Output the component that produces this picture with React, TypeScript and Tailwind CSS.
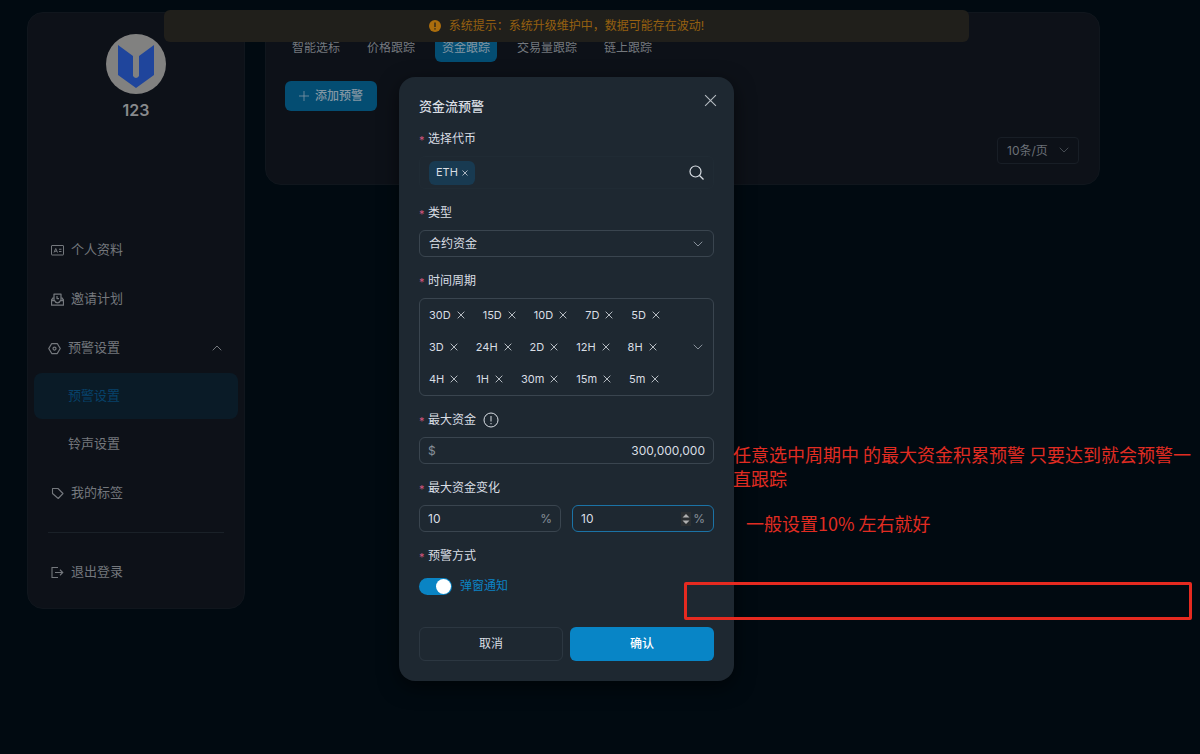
import { useState } from "react";

interface IconProps {
  className?: string;
}

function CrossIcon({ className }: IconProps) {
  return (
    <svg viewBox="0 0 12 12" className={className} fill="none" stroke="currentColor" aria-hidden="true">
      <path d="M1 1l10 10M11 1L1 11" />
    </svg>
  );
}

function ChevronIcon({ className }: IconProps) {
  return (
    <svg viewBox="0 0 10 10" className={className} fill="none" stroke="currentColor" strokeLinecap="round" aria-hidden="true">
      <path d="M1 3l4 4 4-4" />
    </svg>
  );
}

function ProfileIcon({ className }: IconProps) {
  return (
    <svg viewBox="0 0 26 26" className={className} fill="none" stroke="currentColor" strokeWidth="2" aria-hidden="true">
      <rect x="1" y="3" width="24" height="19" rx="1" />
      <path d="M6 17l3.5-8L13 17M7.5 14.5h4M16 10.500h5M16 15h5" />
    </svg>
  );
}

function InviteIcon({ className }: IconProps) {
  return (
    <svg viewBox="0 0 26 26" className={className} fill="none" stroke="currentColor" strokeWidth="2.500" strokeLinejoin="round" aria-hidden="true">
      <path d="M6 15V2h14v13" />
      <path d="M5 9l-4 5v10h24V14l-4-5" />
      <path d="M1 15h6c1 3 3 4.500 6 4.500s5-1.500 6-4.500h6" />
      <path d="M12 6v5h4" />
    </svg>
  );
}

function SettingIcon({ className }: IconProps) {
  return (
    <svg viewBox="0 0 26 26" className={className} fill="none" stroke="currentColor" strokeWidth="2.500" strokeLinejoin="round" aria-hidden="true">
      <path d="M7.500 3h11l6 10-6 10h-11l-6-10z" />
      <circle cx="13" cy="13" r="3" />
    </svg>
  );
}

function TagIcon({ className }: IconProps) {
  return (
    <svg viewBox="0 0 26 26" className={className} fill="none" stroke="currentColor" strokeWidth="2.200" strokeLinejoin="round" aria-hidden="true">
      <path d="M3 3h11l10 10-9.500 10L3 13z" />
    </svg>
  );
}

function LogoutIcon({ className }: IconProps) {
  return (
    <svg viewBox="0 0 26 26" className={className} fill="none" stroke="currentColor" strokeWidth="2.200" aria-hidden="true">
      <path d="M14 3H2v20h12M8 13h16M18 7.500l5.500 5.500-5.500 5.500" />
    </svg>
  );
}

const periods = [
  "30D", "15D", "10D", "7D", "5D",
  "3D", "24H", "2D", "12H", "8H",
  "4H", "1H", "30m", "15m", "5m",
];

const tabs = ["智能选标", "价格跟踪", "资金跟踪", "交易量跟踪", "链上跟踪"];

function Sidebar() {
  const item = "flex h-[46px] items-center gap-[7px] rounded-lg";
  return (
    <aside className="flex w-[218px] shrink-0 flex-col rounded-2xl border border-[#10161d] bg-[#0d1118] px-1.5 pt-[21px] pb-[13px] text-[13px] text-[#74787d]">
      <div className="flex flex-col items-center gap-1.5">
        <svg viewBox="0 0 60 60" className="size-[60px]" aria-hidden="true">
          <circle cx="30" cy="30" r="30" fill="#818180" />
          <path d="M12 11l15 11v20q3 4 6 0V22l15-11v30L30 54 12 41z" fill="#1f459c" />
        </svg>
        <span className="text-base leading-5 font-semibold text-[#87898c]">123</span>
      </div>
      <nav className="mt-[107px] flex flex-col gap-[3px]">
        <a href="#profile" className={`${item} px-[17px]`}>
          <ProfileIcon className="size-[13px]" />
          个人资料
        </a>
        <a href="#invite" className={`${item} px-[17px]`}>
          <InviteIcon className="size-[13px]" />
          邀请计划
        </a>
        <div className="flex flex-col gap-0.5">
          <button type="button" className={`${item} px-3.5`}>
            <SettingIcon className="size-[13px]" />
            预警设置
            <ChevronIcon className="mr-0.5 ml-auto size-2.5 rotate-180" />
          </button>
          <a href="#alert" className={`${item} bg-[#0a1b27] px-[34px] text-[#07426a]`}>
            预警设置
          </a>
          <a href="#ring" className={`${item} px-[34px]`}>
            铃声设置
          </a>
        </div>
        <a href="#tags" className={`${item} px-[17px]`}>
          <TagIcon className="size-[13px]" />
          我的标签
        </a>
      </nav>
      <hr className="mx-3.5 my-4 border-[#1a2128]" />
      <a href="#logout" className={`${item} px-[17px]`}>
        <LogoutIcon className="size-[13px]" />
        退出登录
      </a>
    </aside>
  );
}

function MainPanel() {
  return (
    <main className="flex grow flex-col self-start rounded-2xl border border-[#10161d] bg-[#0d1118] px-[19px] pt-[21px] pb-5">
      <div className="flex gap-[13px] text-xs">
        {tabs.map((tab) => (
          <button
            key={tab}
            type="button"
            className={
              tab === "资金跟踪"
                ? "h-7 rounded-md bg-[#044d72] px-[7px] text-[#8296a3]"
                : "h-7 px-[7px] text-[#74787d]"
            }
          >
            {tab}
          </button>
        ))}
      </div>
      <button
        type="button"
        className="mt-[19px] flex h-[30px] w-[92px] items-center justify-center gap-1.5 rounded-md bg-[#044d72] text-xs font-medium text-[#8296a3]"
      >
        <svg viewBox="0 0 10 10" className="size-2.5" stroke="currentColor" strokeWidth="0.800" aria-hidden="true">
          <path d="M0 5h10M5 0v10" />
        </svg>
        添加预警
      </button>
      <div className="relative mt-[26px] mr-px self-end text-[#6b7077]">
        <select
          aria-label="每页条数"
          className="block h-[27px] w-[82px] appearance-none rounded border border-[#181e26] bg-transparent pl-[9px] text-xs"
        >
          <option>10条/页</option>
        </select>
        <ChevronIcon className="pointer-events-none absolute top-2 right-2.5 size-2.5 text-[#454b52]" />
      </div>
    </main>
  );
}

function FieldLabel({ id, children }: { id: string; children: React.ReactNode }) {
  return (
    <label htmlFor={id} className="flex h-5 items-center gap-1 text-xs text-[#d9dee4]">
      <span className="h-3 w-[5px] text-[11px] leading-[14px] text-[#d3557c]">*</span>
      {children}
    </label>
  );
}

function AlertDialog() {
  const [popup, setPopup] = useState(true);
  const box = "rounded-md border border-[#3a454f]";

  return (
    <form
      role="dialog"
      aria-label="资金流预警"
      onSubmit={(e) => e.preventDefault()}
      className="w-[335px] rounded-2xl bg-[#1e2831] p-5 text-xs text-[#d9dee4] shadow-[0_6px_20px_rgba(0,0,0,0.55)]"
    >
      <div className="relative mb-3 flex h-5 items-center">
        <h2 className="text-[13px] font-medium">资金流预警</h2>
        <button type="button" aria-label="关闭" className="absolute -top-1 -right-1 p-px">
          <CrossIcon className="size-[13px] text-[#b5bbc1]" />
        </button>
      </div>

      <div className="flex flex-col gap-3.5">
        <div className="flex flex-col gap-[7px]">
          <FieldLabel id="token">选择代币</FieldLabel>
          <div className="flex h-[33px] items-center rounded-md border border-[#202b34] px-[9px]">
            <span className="flex h-6 shrink-0 items-center gap-1 rounded-md bg-[#183a51] px-[7px] text-[11px]">
              ETH
              <button type="button" aria-label="移除 ETH">
                <CrossIcon className="size-1.5 stroke-[1.5]" />
              </button>
            </span>
            <input id="token" className="min-w-0 grow bg-transparent outline-none" />
            <svg viewBox="0 0 15 15" className="size-[15px] shrink-0" fill="none" stroke="currentColor" strokeWidth="1.2" aria-hidden="true">
              <circle cx="6.500" cy="6.500" r="5.500" />
              <path d="M10.500 10.500l4 4" />
            </svg>
          </div>
        </div>

        <div className="flex flex-col gap-[7px]">
          <FieldLabel id="type">类型</FieldLabel>
          <div className="relative">
            <select id="type" className={`${box} block h-[27px] w-full appearance-none bg-transparent px-[9px]`}>
              <option>合约资金</option>
            </select>
            <ChevronIcon className="pointer-events-none absolute top-[9px] right-[11px] size-2.5 text-[#87909a]" />
          </div>
        </div>

        <div className="flex flex-col gap-[7px]">
          <FieldLabel id="periods">时间周期</FieldLabel>
          <div className={`${box} flex items-center justify-between pr-2.5 pl-[9px]`}>
            <ul className="text-[11px]">
              {[0, 5, 10].map((start) => (
                <li key={start} className="flex h-8 items-center gap-[18px]">
                  {periods.slice(start, start + 5).map((p) => (
                    <span key={p} className="flex items-center gap-1.5">
                      {p}
                      <button type="button" aria-label={`移除 ${p}`}>
                        <CrossIcon className="size-2 stroke-[1.5] text-[#b5bbc1]" />
                      </button>
                    </span>
                  ))}
                </li>
              ))}
            </ul>
            <button id="periods" type="button" aria-label="展开时间周期">
              <ChevronIcon className="size-2.5 text-[#87909a]" />
            </button>
          </div>
        </div>

        <div className="flex flex-col gap-[7px]">
          <FieldLabel id="max">
            最大资金
            <svg viewBox="0 0 16 16" className="ml-[3px] size-4" fill="none" stroke="currentColor" aria-hidden="true">
              <circle cx="8" cy="8" r="7" />
              <path d="M8 4v5.500M8 11v1.200" />
            </svg>
          </FieldLabel>
          <div className={`${box} flex h-[27px] items-center px-2`}>
            <span className="text-[#87909a]">$</span>
            <input
              id="max"
              inputMode="numeric"
              defaultValue="300,000,000"
              className="min-w-0 grow bg-transparent text-right outline-none"
            />
          </div>
        </div>

        <div className="flex flex-col gap-[7px]">
          <FieldLabel id="change-from">最大资金变化</FieldLabel>
          <div className="grid grid-cols-2 gap-[11px]">
            <div className={`${box} flex h-[27px] items-center px-2`}>
              <input
                id="change-from"
                inputMode="numeric"
                defaultValue="10"
                className="min-w-0 grow bg-transparent outline-none"
              />
              <span className="text-[#87909a]">%</span>
            </div>
            <div className="flex h-[27px] items-center rounded-md border border-[#1b73a6] px-2">
              <input
                aria-label="最大资金变化上限"
                inputMode="numeric"
                defaultValue="10"
                className="min-w-0 grow bg-transparent outline-none"
              />
              <svg viewBox="0 0 10 14" className="mr-0.5 h-3.5 w-2.5 shrink-0 bg-[#2b2f32]" fill="#b0b0b0" aria-hidden="true">
                <path d="M1.500 5.500L5 2l3.500 3.500zM1.500 8.500L5 12l3.500-3.500z" />
              </svg>
              <span className="text-[#87909a]">%</span>
            </div>
          </div>
        </div>

        <div className="flex flex-col gap-[7px]">
          <FieldLabel id="popup">预警方式</FieldLabel>
          <label className="flex h-[26px] items-center gap-2 text-[#0b83c4]">
            <input
              id="popup"
              type="checkbox"
              role="switch"
              checked={popup}
              onChange={(e) => setPopup(e.target.checked)}
              className="relative h-[17px] w-[33px] appearance-none rounded-full bg-[#4a545d] before:absolute before:top-px before:left-px before:size-[15px] before:rounded-full before:bg-white checked:bg-[#0a84c4] checked:before:left-[17px]"
            />
            弹窗通知
          </label>
        </div>
      </div>

      <div className="mt-7 grid grid-cols-2 gap-[7px]">
        <button type="button" className="h-[34px] rounded-md border border-[#2c3741]">
          取消
        </button>
        <button type="submit" className="h-[34px] rounded-md bg-[#0885c6] font-medium text-white">
          确认
        </button>
      </div>
    </form>
  );
}

export default function App() {
  return (
    <div className="relative min-h-screen overflow-hidden bg-[#010a11] font-['Inter','Noto_Sans_CJK_SC',sans-serif]">
      <div className="flex items-start gap-5 pt-3 pr-[100px] pl-[27px]">
        <Sidebar />
        <MainPanel />
      </div>

      {/* system notice, floating above the tabs */}
      <div className="absolute inset-x-0 top-2.5 flex justify-center pr-[67px]">
        <div
          role="status"
          className="flex h-8 w-[805px] items-center justify-center gap-2 rounded-md bg-[#201f1b] text-xs text-[#956010]"
        >
          <svg viewBox="0 0 12 12" className="size-3" aria-hidden="true">
            <circle cx="6" cy="6" r="6" fill="#ab6d0d" />
            <path d="M6 2.500v4.500M6 8.200v1.400" stroke="#201f1b" strokeWidth="1.300" />
          </svg>
          系统提示：系统升级维护中，数据可能存在波动!
        </div>
      </div>

      <div className="absolute inset-x-0 top-[77px] flex justify-center pr-[67px]">
        <AlertDialog />
      </div>

      {/* notes pinned over the dialog */}
      <div className="font-['Noto_Sans_CJK_SC',sans-serif] text-lg leading-6 text-[#e02c22]">
        <p className="absolute top-[442px] left-[733px] w-[462px]">
          任意选中周期中 的最大资金积累预警 只要达到就会预警一直跟踪
        </p>
        <p className="absolute top-[511px] left-[746px]">一般设置10% 左右就好</p>
        <div className="absolute top-[582px] left-[684px] h-[38px] w-[508px] rounded-xs border-3 border-[#e62a20]" />
      </div>
    </div>
  );
}
